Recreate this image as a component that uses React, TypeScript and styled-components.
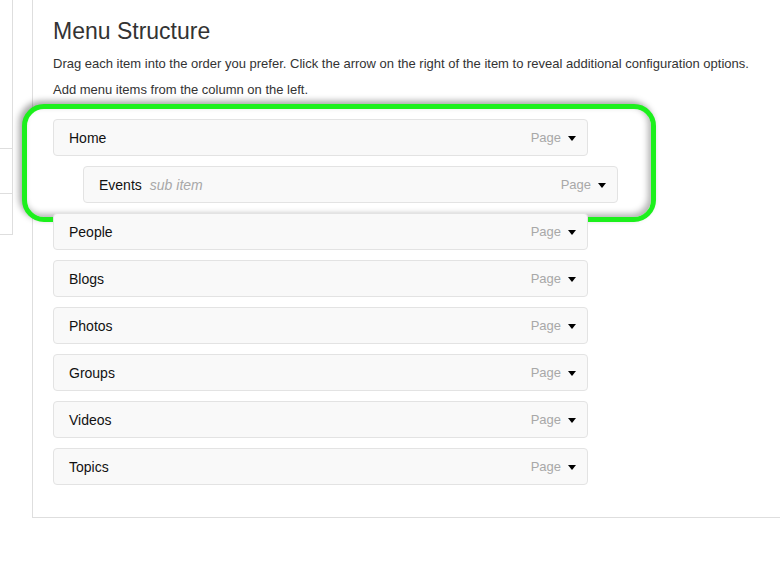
import styled, { createGlobalStyle } from "styled-components";

const GlobalStyle = createGlobalStyle`
  html, body {
    margin: 0;
    padding: 0;
    background: #fff;
    font-family: "Liberation Sans", Arial, sans-serif;
  }
`;

const Page = styled.div`
  display: flex;
  align-items: flex-start;
  gap: 19px;
  width: 780px;
  height: 574px;
  overflow: hidden;
`;

const Sidebar = styled.div`
  width: 12px;
  flex-shrink: 0;
  border-right: 1px solid #dedede;
  border-bottom: 1px solid #dedede;
  display: flex;
  flex-direction: column;
`;

const SidebarRow = styled.div<{ $h: number }>`
  height: ${(p) => p.$h}px;
  border-bottom: 1px solid #dedede;
  &:last-child {
    border-bottom: none;
  }
`;

const Panel = styled.div`
  flex: 1;
  box-sizing: border-box;
  height: 518px;
  border-left: 1px solid #dedede;
  border-bottom: 1px solid #dedede;
  padding: 18px 20px 0;
`;

const Title = styled.h2`
  margin: 0 0 11px;
  font-size: 23px;
  line-height: 26px;
  font-weight: normal;
  color: #333;
`;

const Hint = styled.p`
  margin: 0 0 8px;
  font-size: 13px;
  line-height: 18px;
  color: #333;
  white-space: nowrap;
`;

const List = styled.div`
  display: flex;
  flex-direction: column;
  align-items: flex-start;
  gap: 10px;
  margin-top: 20px;
`;

// the item being dragged, with its child, sits inside a highlighted frame
const DragGroup = styled.div`
  position: relative;
  display: flex;
  flex-direction: column;
  gap: 10px;

  &::before {
    content: "";
    position: absolute;
    top: -15px;
    left: -31px;
    right: -38px;
    bottom: -19px;
    z-index: 1;
    background: #fff;
    border: 5px solid #1cf01c;
    border-radius: 22px;
    box-shadow: -3px -3px 6px rgba(0, 0, 0, 0.35),
      inset -3px -3px 6px rgba(0, 0, 0, 0.3);
  }
`;

const Item = styled.div<{ $depth?: number }>`
  position: relative;
  z-index: 2;
  box-sizing: border-box;
  width: 535px;
  height: 37px;
  margin-left: ${(p) => (p.$depth || 0) * 30}px;
  display: flex;
  align-items: center;
  padding: 0 11px 0 15px;
  background: #f9f9f9;
  border: 1px solid #e3e3e3;
  border-radius: 4px;
  font-size: 14px;
  color: #111;
`;

const Name = styled.span`
  flex-shrink: 0;
`;

const Sub = styled.span`
  margin-left: 8px;
  font-style: italic;
  color: #a8a8a8;
`;

const Type = styled.span`
  margin-left: auto;
  font-size: 13px;
  color: #a8a8a8;
`;

const Caret = styled.span`
  margin-left: 7px;
  margin-top: 2px;
  width: 0;
  height: 0;
  border-left: 4px solid transparent;
  border-right: 4px solid transparent;
  border-top: 5px solid #000;
`;

interface MenuItem {
  name: string;
  sub?: boolean;
}

const rest: MenuItem[] = [
  { name: "People" },
  { name: "Blogs" },
  { name: "Photos" },
  { name: "Groups" },
  { name: "Videos" },
  { name: "Topics" },
];

function Row({ item, depth }: { item: MenuItem; depth?: number }) {
  return (
    <Item $depth={depth}>
      <Name>{item.name}</Name>
      {item.sub && <Sub>sub item</Sub>}
      <Type>Page</Type>
      <Caret />
    </Item>
  );
}

function App() {
  return (
    <>
      <GlobalStyle />
      <Page>
        <Sidebar>
          <SidebarRow $h={148} />
          <SidebarRow $h={44} />
          <SidebarRow $h={40} />
        </Sidebar>
        <Panel>
          <Title>Menu Structure</Title>
          <Hint>
            Drag each item into the order you prefer. Click the arrow on the
            right of the item to reveal additional configuration options.
          </Hint>
          <Hint>Add menu items from the column on the left.</Hint>
          <List>
            <DragGroup>
              <Row item={{ name: "Home" }} />
              <Row item={{ name: "Events", sub: true }} depth={1} />
            </DragGroup>
            {rest.map((it) => (
              <Row key={it.name} item={it} />
            ))}
          </List>
        </Panel>
      </Page>
    </>
  );
}

export default App;
